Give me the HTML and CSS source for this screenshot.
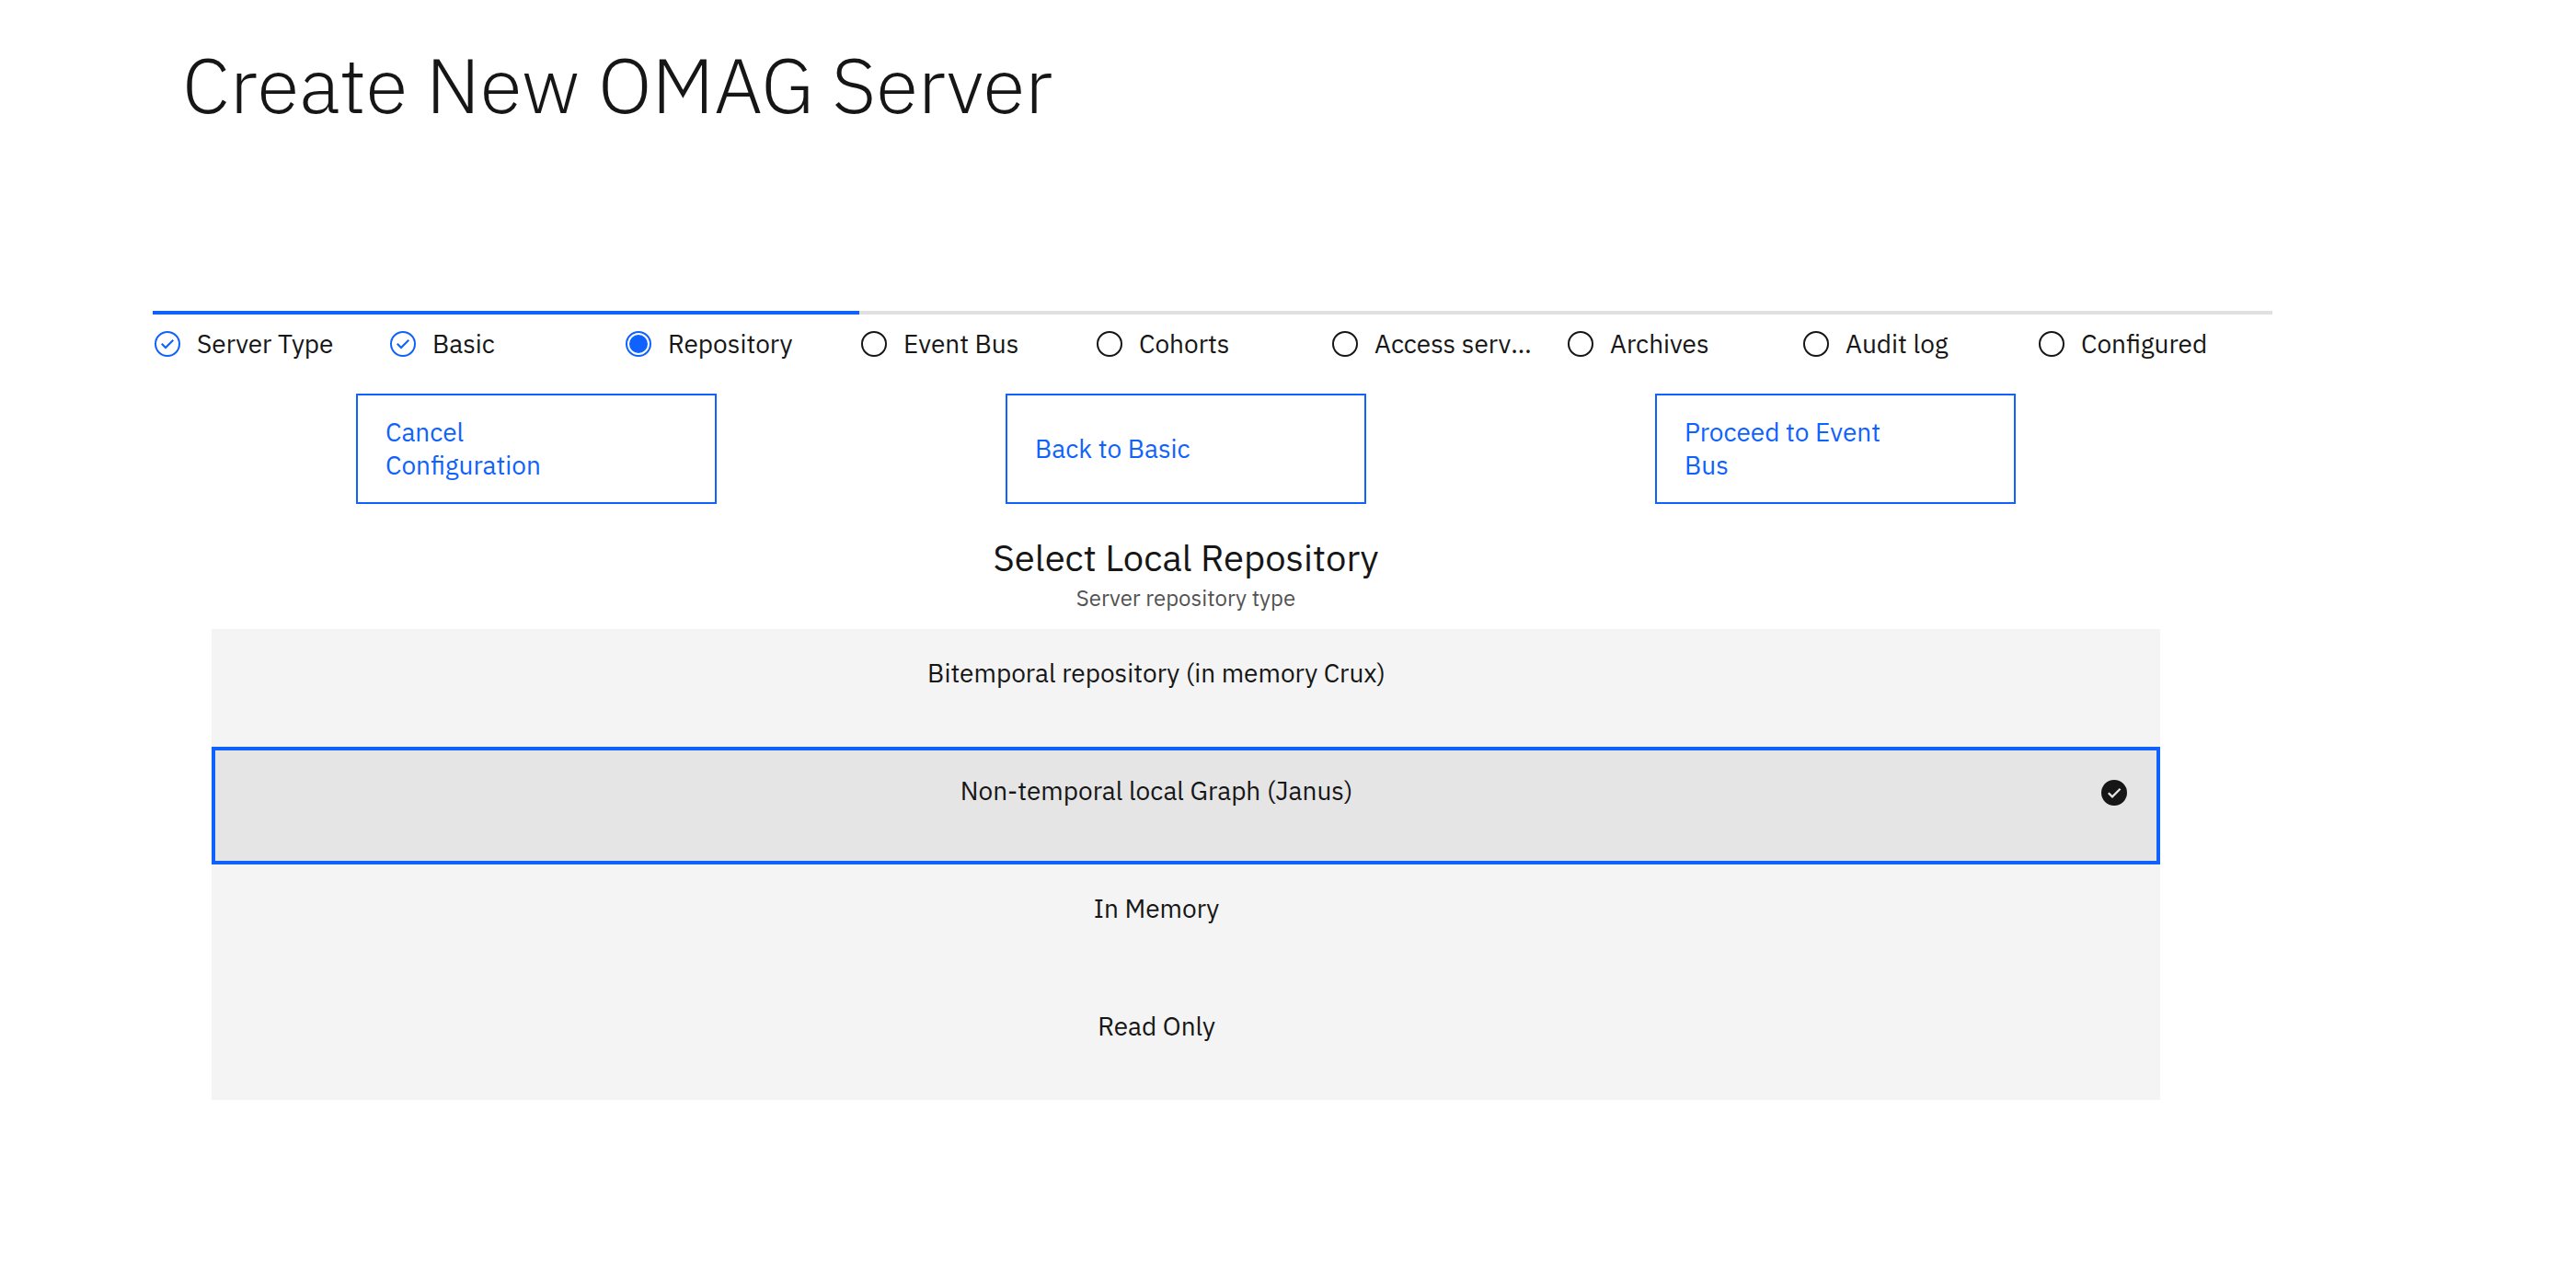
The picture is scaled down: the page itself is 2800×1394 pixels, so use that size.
FILE: index.html
```
<!DOCTYPE html>
<html lang="en">
<head>
  <meta charset="utf-8">
  <title>Create New OMAG Server</title>
  <link rel="stylesheet" href="styles.css">
</head>
<body>
  <svg class="sprite" aria-hidden="true">
    <symbol id="step-complete" viewBox="0 0 32 32">
      <path d="M14 21.5L9 16.5 10.5 15 14 18.5 21.500 11 23 12.500z"/>
      <path d="M16 2a14 14 0 1 0 14 14A14 14 0 0 0 16 2Zm0 26a12 12 0 1 1 12-12 12 12 0 0 1-12 12Z"/>
    </symbol>
    <symbol id="step-current" viewBox="0 0 32 32">
      <path d="M16 2a14 14 0 1 0 14 14A14 14 0 0 0 16 2Zm0 26a12 12 0 1 1 12-12 12 12 0 0 1-12 12Z"/>
      <circle cx="16" cy="16" r="10"/>
    </symbol>
    <symbol id="step-todo" viewBox="0 0 32 32">
      <path d="M16 2a14 14 0 1 0 14 14A14 14 0 0 0 16 2Zm0 26a12 12 0 1 1 12-12 12 12 0 0 1-12 12Z"/>
    </symbol>
    <symbol id="tile-check" viewBox="0 0 32 32">
      <path fill-rule="evenodd" d="M16 2a14 14 0 1 0 14 14A14 14 0 0 0 16 2Zm-2 20L9 17 10.590 15.400 14 18.800 21.800 11 23.400 12.590Z"/>
    </symbol>
  </svg>

  <main class="page">
    <h1 class="page-title">Create New OMAG Server</h1>

    <ol class="progress">
      <li class="step step-done"><svg class="icon"><use href="#step-complete"/></svg><span class="step-label">Server Type</span></li>
      <li class="step step-done"><svg class="icon"><use href="#step-complete"/></svg><span class="step-label">Basic</span></li>
      <li class="step step-done" aria-current="step"><svg class="icon"><use href="#step-current"/></svg><span class="step-label">Repository</span></li>
      <li class="step"><svg class="icon"><use href="#step-todo"/></svg><span class="step-label">Event Bus</span></li>
      <li class="step"><svg class="icon"><use href="#step-todo"/></svg><span class="step-label">Cohorts</span></li>
      <li class="step"><svg class="icon"><use href="#step-todo"/></svg><span class="step-label">Access services</span></li>
      <li class="step"><svg class="icon"><use href="#step-todo"/></svg><span class="step-label">Archives</span></li>
      <li class="step"><svg class="icon"><use href="#step-todo"/></svg><span class="step-label">Audit log</span></li>
      <li class="step"><svg class="icon"><use href="#step-todo"/></svg><span class="step-label">Configured</span></li>
    </ol>

    <form class="repository">
      <div class="actions">
        <button class="button" type="button">Cancel Configuration</button>
        <button class="button" type="button">Back to Basic</button>
        <button class="button" type="button">Proceed to Event Bus</button>
      </div>

      <h2 class="section-title">Select Local Repository</h2>
      <fieldset class="tiles">
        <legend class="tiles-legend">Server repository type</legend>
        <label class="tile"><input class="tile-input" type="radio" name="repository">Bitemporal repository (in memory Crux)<svg class="icon tile-icon"><use href="#tile-check"/></svg></label>
        <label class="tile"><input class="tile-input" type="radio" name="repository" checked>Non-temporal local Graph (Janus)<svg class="icon tile-icon"><use href="#tile-check"/></svg></label>
        <label class="tile"><input class="tile-input" type="radio" name="repository">In Memory<svg class="icon tile-icon"><use href="#tile-check"/></svg></label>
        <label class="tile"><input class="tile-input" type="radio" name="repository">Read Only<svg class="icon tile-icon"><use href="#tile-check"/></svg></label>
      </fieldset>
    </form>
  </main>
</body>
</html>
```
FILE: styles.css
```
* {
  box-sizing: border-box;
}

body {
  margin: 0;
  background: #fff;
  color: #161616;
  font-family: "IBM Plex Sans", "Noto Sans", sans-serif;
  font-size: 28px;
  line-height: 36px;
}

.sprite {
  display: none;
}

.icon {
  flex: none;
  width: 32px;
  height: 32px;
  fill: currentColor;
}

.page {
  padding: 42px 330px 64px 166px;
}

.page-title {
  margin: 0 0 196px 32px;
  font-size: 84px;
  font-weight: 300;
  line-height: 100px;
}

/* Progress indicator */

.progress {
  display: flex;
  margin: 0 0 36px;
  padding: 0;
  list-style: none;
}

.step {
  display: flex;
  flex: 1 1 0;
  align-items: center;
  gap: 16px;
  min-width: 0;
  padding-top: 14px;
  border-top: 4px solid #e0e0e0;
}

.step-done {
  border-top-color: #0f62fe;
}

.step-done .icon {
  color: #0f62fe;
}

.step-label {
  max-width: 176px;
  overflow: hidden;
  text-overflow: ellipsis;
  white-space: nowrap;
}

/* Repository form */

.repository {
  margin: 0 122px 0 64px;
}

.actions {
  display: grid;
  grid-template-columns: repeat(3, 1fr);
  justify-items: center;
  margin-bottom: 30px;
}

.button {
  width: 392px;
  min-height: 120px;
  padding: 20px 126px 20px 30px;
  border: 2px solid #0f62fe;
  border-radius: 0;
  background: transparent;
  color: #0f62fe;
  font: inherit;
  text-align: left;
  cursor: pointer;
}

.section-title {
  margin: 0;
  font-size: 40px;
  font-weight: 400;
  line-height: 56px;
  text-align: center;
}

.tiles {
  margin: 0;
  padding: 0;
  border: 0;
}

.tiles-legend {
  width: 100%;
  margin-bottom: 18px;
  padding: 0;
  color: #525252;
  font-size: 24px;
  line-height: 32px;
  text-align: center;
}

.tile {
  position: relative;
  display: block;
  min-height: 128px;
  padding: 30px 96px 30px 32px;
  background: #f4f4f4;
  text-align: center;
  cursor: pointer;
}

.tile-input {
  position: absolute;
  margin: 0;
  opacity: 0;
}

.tile-icon {
  position: absolute;
  top: 34px;
  right: 34px;
  visibility: hidden;
}

.tile:has(:checked) {
  outline: 4px solid #0f62fe;
  outline-offset: -4px;
  background: #e5e5e5;
}

.tile:has(:checked) .tile-icon {
  visibility: visible;
}
```
